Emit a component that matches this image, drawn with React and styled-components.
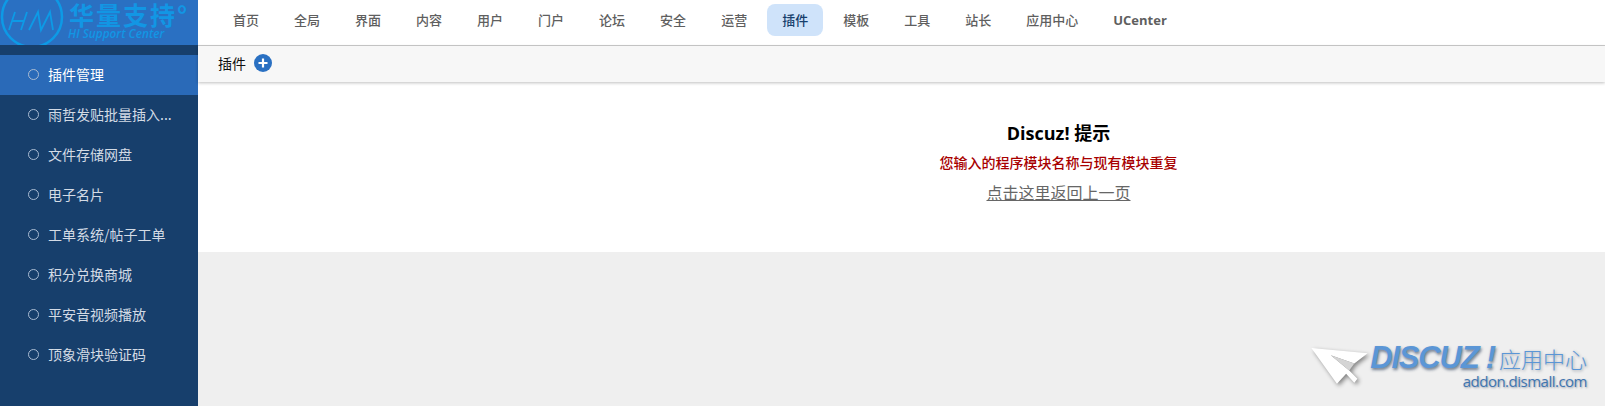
import React from "react";
import styled, { createGlobalStyle } from "styled-components";

const FONT = `"Noto Sans CJK SC", "Noto Sans", sans-serif`;

const Global = createGlobalStyle`
  html, body { margin: 0; padding: 0; height: 100%; background: #efefef; overflow: hidden; }
  body { font-family: ${FONT}; }
  * { box-sizing: border-box; }
`;

const Page = styled.div`
  display: flex;
  width: 1605px;
  height: 406px;
  position: relative;
  overflow: hidden;
  background: #efefef;
`;

const Sidebar = styled.aside`
  width: 198px;
  flex: none;
  background: #173f6c;
  display: flex;
  flex-direction: column;
`;

const LogoBar = styled.div`
  height: 45px;
  background: #2a70c2;
  display: flex;
  align-items: flex-start;
  margin-bottom: 10px;
  flex: none;
`;

const LogoMark = styled.svg`
  width: 66px;
  height: 45px;
  flex: none;
`;

const LogoText = styled.div`
  margin-left: 3px;
  color: #1296e4;
  display: flex;
  flex-direction: column;
`;

const LogoTitle = styled.div`
  font-size: 25px;
  font-weight: 700;
  line-height: 25px;
  margin-top: 2px;
  letter-spacing: 2px;
  white-space: nowrap;
`;

const LogoSub = styled.div`
  font-family: "Open Sans", sans-serif;
  font-size: 11.8px;
  font-style: italic;
  font-weight: 600;
  line-height: 13px;
  margin-left: -1px;
  white-space: nowrap;
`;

const SideMenu = styled.nav`
  display: flex;
  flex-direction: column;
`;

const SideItem = styled.div`
  height: 40px;
  padding-left: 28px;
  padding-bottom: 2px;
  display: flex;
  align-items: center;
  gap: 9px;
  font-size: 14px;
  color: ${(p) => (p.$active ? "#ffffff" : "#d3dbe5")};
  background: ${(p) => (p.$active ? "#2a6ab8" : "transparent")};
  white-space: nowrap;
`;

const Dot = styled.span`
  width: 11px;
  height: 11px;
  border-radius: 50%;
  border: 1px solid #a9bbd2;
  flex: none;
`;

const SideLabel = styled.span`
  display: block;
`;

const Main = styled.main`
  flex: 1;
  display: flex;
  flex-direction: column;
`;

const TopNav = styled.header`
  height: 46px;
  background: #fff;
  border-bottom: 1px solid #cccccc;
  display: flex;
  align-items: flex-start;
  padding: 4px 0 0 20px;
  gap: 5px;
  flex: none;
`;

const NavItem = styled.a`
  height: 32px;
  padding: 0 15px 2px;
  border-radius: 8px;
  display: flex;
  align-items: center;
  font-size: 13px;
  font-weight: 500;
  color: ${(p) => (p.$active ? "#173f6c" : "#5f5f5f")};
  background: ${(p) => (p.$active ? "#cfe3fa" : "transparent")};
  white-space: nowrap;
`;

const NavLatin = styled(NavItem)`
  font-family: "Open Sans", sans-serif;
  font-weight: 700;
  padding-bottom: 0;
`;

const TabBar = styled.div`
  height: 36px;
  background: #f7f7f7;
  box-shadow: 0 1px 3px rgba(0, 0, 0, 0.25);
  display: flex;
  align-items: center;
  padding: 0 0 3px 20px;
  gap: 8px;
  flex: none;
  position: relative;
  font-size: 14px;
  color: #111;
`;

const PlusBadge = styled.svg`
  width: 18px;
  height: 18px;
  flex: none;
`;

const Notice = styled.section`
  height: 170px;
  background: #fff;
  flex: none;
  padding: 37px 0 0 314px;
  display: flex;
  flex-direction: column;
  align-items: center;
`;

const NoticeTitle = styled.h3`
  margin: 0;
  font-family: "Open Sans", ${FONT};
  font-size: 18px;
  line-height: 28px;
  font-weight: 700;
  color: #000;
`;

const NoticeText = styled.p`
  margin: 5px 0 0;
  font-size: 14px;
  font-weight: 500;
  line-height: 20px;
  color: #a80000;
`;

const BackLink = styled.a`
  margin-top: 8px;
  font-size: 16px;
  line-height: 24px;
  color: #666;
  text-decoration: underline;
`;

const Watermark = styled.div`
  position: absolute;
  right: 18px;
  bottom: 16px;
  display: flex;
  align-items: flex-start;
`;

const Plane = styled.svg`
  width: 60px;
  height: 45px;
  flex: none;
  margin-top: 1px;
  filter: drop-shadow(2px 2px 2px rgba(0, 0, 0, 0.45));
`;

const WmText = styled.div`
  display: flex;
  flex-direction: column;
  align-items: flex-end;
`;

const WmTop = styled.div`
  display: flex;
  align-items: center;
  height: 28px;
`;

const WmBrand = styled.span`
  font-family: "Liberation Sans", sans-serif;
  font-size: 31px;
  font-weight: 700;
  font-style: italic;
  letter-spacing: -1.2px;
  color: #5b96d6;
  text-shadow: 1px 2px 3px rgba(30, 50, 80, 0.6);
`;

const WmCn = styled.span`
  font-size: 22px;
  font-weight: 300;
  color: #5b96d6;
  margin-left: 4px;
  text-shadow: 1px 1px 3px rgba(30, 50, 80, 0.45);
`;

const WmUrl = styled.div`
  font-family: "Open Sans", sans-serif;
  font-size: 15px;
  line-height: 18px;
  letter-spacing: -0.5px;
  color: #3f75b0;
  text-shadow: 1px 1px 2px rgba(30, 50, 80, 0.4);
`;

const sideItems = [
  "插件管理",
  "雨哲发贴批量插入...",
  "文件存储网盘",
  "电子名片",
  "工单系统/帖子工单",
  "积分兑换商城",
  "平安音视频播放",
  "顶象滑块验证码",
];

const navItems = ["首页", "全局", "界面", "内容", "用户", "门户", "论坛", "安全", "运营", "插件", "模板", "工具", "站长", "应用中心"];

export default function App() {
  return (
    <Page>
      <Global />
      <Sidebar>
        <LogoBar>
          <LogoMark viewBox="0 0 66 45" fill="none" stroke="#0d9ae6">
            <circle cx="32" cy="17" r="30" strokeWidth="2.5" />
            <path
              d="M9 30 L15 12 M12 21 H24 M21 30 L27 12 M29 30 L38 12 L41 30 L50 12 L53 30"
              strokeWidth="1.8"
            />
          </LogoMark>
          <LogoText>
            <LogoTitle>华量支持°</LogoTitle>
            <LogoSub>HI Support Center</LogoSub>
          </LogoText>
        </LogoBar>
        <SideMenu>
          {sideItems.map((t, i) => (
            <SideItem key={t} $active={i === 0}>
              <Dot />
              <SideLabel>{t}</SideLabel>
            </SideItem>
          ))}
        </SideMenu>
      </Sidebar>
      <Main>
        <TopNav>
          {navItems.map((t) => (
            <NavItem key={t} $active={t === "插件"}>{t}</NavItem>
          ))}
          <NavLatin>UCenter</NavLatin>
        </TopNav>
        <TabBar>
          插件
          <PlusBadge viewBox="0 0 18 18">
            <circle cx="9" cy="9" r="9" fill="#2a70c2" />
            <path d="M9 4.5v9M4.5 9h9" stroke="#fff" strokeWidth="2.2" />
          </PlusBadge>
        </TabBar>
        <Notice>
          <NoticeTitle>Discuz! 提示</NoticeTitle>
          <NoticeText>您输入的程序模块名称与现有模块重复</NoticeText>
          <BackLink>点击这里返回上一页</BackLink>
        </Notice>
      </Main>
      <Watermark>
        <Plane viewBox="0 0 58 44">
          <path d="M1 3 L56 8 L43 18 L20 10 L38 25 L46 33 L43 37 L35 28 L26 38 Z" fill="#ffffff" />
          <path d="M20 10 L43 18 L38 25 Z" fill="#d4d4d4" />
        </Plane>
        <WmText>
          <WmTop>
            <WmBrand>DISCUZ !</WmBrand>
            <WmCn>应用中心</WmCn>
          </WmTop>
          <WmUrl>addon.dismall.com</WmUrl>
        </WmText>
      </Watermark>
    </Page>
  );
}
